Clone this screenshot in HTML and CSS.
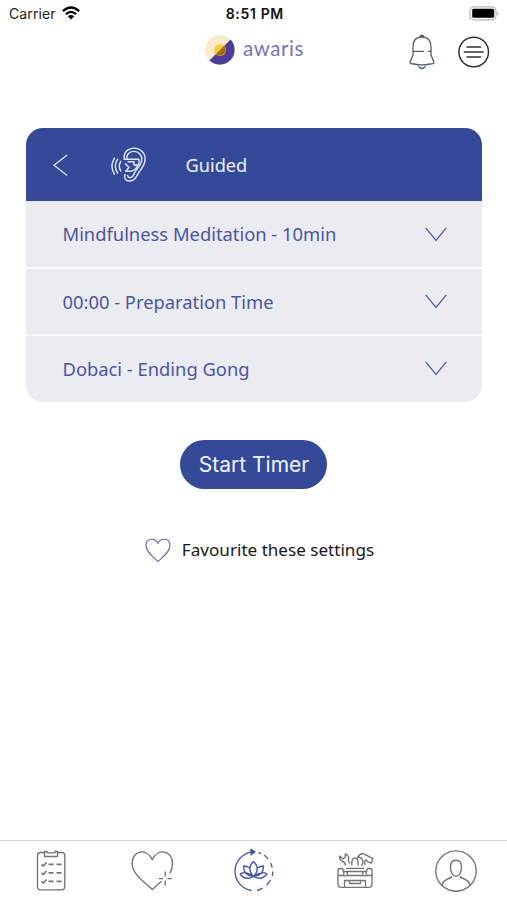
FILE: index.html
```html
<!DOCTYPE html>
<html lang="en">
<head>
<meta charset="utf-8">
<title>Awaris</title>
<link rel="stylesheet" href="styles.css">
</head>
<body>
<div class="screen">
  <div class="status">
    <div class="carrier"><span>Carrier</span>
      <svg width="18" height="14" viewBox="0 0 18 14" fill="none" stroke="#000" stroke-width="2.3"><path d="M.9 5.2Q9-2.2 17.1 5.2M3.9 8.2Q9 3.5 14.1 8.2"/><path d="M5.8 10.3Q9 7.6 12.2 10.3L9 13.5Z" fill="#000" stroke="none"/></svg>
    </div>
    <div class="clock">8:51 PM</div>
    <svg class="battery" width="31" height="15" viewBox="0 0 31 15"><rect x="1" y=".8" width="26" height="13" rx="4" fill="#fff" stroke="#b9b9b9" stroke-width="1.3"/><rect x="3.2" y="2.8" width="22" height="9" rx="1.5" fill="#000"/><path d="M28.4 5.2q2 2.1 0 4.2z" fill="#999"/></svg>
  </div>
  <header class="top">
    <div class="brand">
      <svg width="32" height="30" viewBox="0 0 32 30"><circle cx="16" cy="15" r="15" fill="#fdebd0"/><path d="M5.4 25.6 26.6 4.4A15 15 0 0 1 5.4 25.6Z" fill="#4b3d98"/><circle cx="16" cy="15" r="6" fill="#f8cb45"/><path d="M11.76 19.24 20.24 10.76A6 6 0 0 1 11.76 19.24Z" fill="#a36d0c"/></svg>
      <span class="wordmark">awar<span class="dotted">ı</span>s</span>
    </div>
    <svg class="bell" width="28" height="36" viewBox="0 0 28 36" fill="none" stroke="#555b70" stroke-width="1.3" stroke-linecap="round" stroke-linejoin="round"><path d="M11.5 3.3Q14-.8 16.5 3.3M5 17.4V13Q5 3 14 3T23 13V21L26 28.3Q26 30 22 30Q14 31.8 6 30Q2 30 2 28.3L5 21ZM5 17.4H15.5M20.5 17.4H23M10.8 32.8Q14 36.2 17.2 32.8"/></svg>
    <svg class="menu" width="32" height="32" viewBox="0 0 32 32" fill="none" stroke="#303030" stroke-width="1.5" stroke-linecap="round"><circle cx="15.7" cy="16" r="14.8"/><path d="M9 11H22.5M6.3 16H25.2M9 21H22.5"/></svg>
  </header>
  <main>
    <section class="card">
      <div class="card-head">
        <svg class="back" width="15" height="23" viewBox="0 0 15 23" fill="none" stroke="#dbe2fa" stroke-width="1.3"><path d="M14.2 1 1 11.2 14.2 21.5"/></svg>
        <svg class="ear" width="36" height="36" viewBox="0 0 36 36" fill="none" stroke="#e2e8fc" stroke-width="1.4" stroke-linecap="round" stroke-linejoin="round"><path d="M13.2 12Q12.5 5.5 17 2.8C22-.2 29 .8 32.5 6C37 14 31 21 28.5 24.5C25.5 29 24 34 18.5 34C14.5 34 12.8 31 13.9 27.5"/><path d="M16 11.5C15 8 18 4.6 22.5 4.4C28 4.2 31.2 8.5 30.7 13C30.2 19 25.5 21.5 23.3 26.5C21.7 31 17.5 32 16.5 28.5M13.2 12.2H27.8Q29 16.2 25.8 20M17 14.8H23V18H27M14.5 16.7 18 20.5 14.7 24.3H20.5Q24.5 23 25.8 20"/><path d="M9.8 14.3Q6.7 19.2 9.8 24M6.6 12.2Q2 19.2 6.6 26.2M3.4 11.2Q-1.6 19.2 3.4 27.2"/></svg>
        <h1>Guided</h1>
      </div>
      <div class="row"><span>Mindfulness Meditation - 10min</span><svg width="22" height="15" viewBox="0 0 22 15"><path d="M.7.8 11 13.5 21.3.8"/></svg></div>
      <div class="row"><span>00:00 - Preparation Time</span><svg width="22" height="15" viewBox="0 0 22 15"><path d="M.7.8 11 13.5 21.3.8"/></svg></div>
      <div class="row"><span>Dobaci - Ending Gong</span><svg width="22" height="15" viewBox="0 0 22 15"><path d="M.7.8 11 13.5 21.3.8"/></svg></div>
    </section>
    <button class="start">Start Timer</button>
    <div class="favourite">
      <svg width="26" height="25" viewBox="0 0 26 25" fill="none" stroke="#6267aa" stroke-width="1.1"><path d="M13 5.3C10-.6 1-.2 1 7.5C1 14 8 18.5 13 23.5C18 18.5 25 14 25 7.5C25-.2 16-.6 13 5.3Z"/></svg>
      <span>Favourite these settings</span>
    </div>
  </main>
  <nav class="tabs">
    <a><svg width="44" height="44" viewBox="0 0 44 44"><path d="M15 3.5H11.5Q8.5 3.5 8.5 6.5V37.5Q8.5 40.8 11.5 40.8H32.5Q35.8 40.8 35.8 37.5V6.5Q35.8 3.5 32.5 3.5H29M15.5 2.5H18V3.8H26V2.5H28.5V7.5H15.5Z"/><path stroke-width="1.7" d="M12.5 15.3 14.3 17 17.5 13.5M12.5 23.8 14.3 25.5 17.5 22M12.5 32.3 14.3 34 17.5 30.5M19.5 15.3H24.5M27.5 15.3H32.5M19.5 23.8H24.5M27.5 23.8H32.5M19.5 32.3H24.5M27.5 32.3H32.5"/></svg></a>
    <a><svg width="44" height="44" viewBox="0 0 44 44"><path d="M39.8 24.4C41.5 21.5 42.5 18.5 42.5 14.5C42.5 1.5 28-1.5 22.3 10.8C16.5-1.5 2.2 1.5 2.2 14C2.2 25.5 13.5 32 22.3 40.5L31.5 32.3M35.2 22.5V27.5M35.2 31.5V36.5M28.8 29.6H33.3M37.3 29.6H41.8"/></svg></a>
    <a><svg class="active" width="44" height="44" viewBox="0 0 44 44"><path d="M19.5 41.5A19.5 19.5 0 0 1 21 2.8"/><path d="M19 .3 23 2.9 19 5.8Z" fill="#465aa3"/><path d="M26.5 3.6 29 4.5M32 6A20 20 0 0 1 36 10M38.5 14A20 20 0 0 1 40.2 18.5M40.8 22.5A20 20 0 0 1 40.2 27M38.4 31A20 20 0 0 1 34.7 36M30.5 39.2A20 20 0 0 1 25 41.5"/><path d="M21.5 27.5Q14 19.5 21.5 12.5Q29 19.5 21.5 27.5M21.5 27.5Q11.5 27 11.5 17Q14 16.7 17.1 18.8M21.5 27.5Q31.5 27 31.5 17Q29 16.7 25.9 18.8M21.5 27.5Q13.5 21.5 8 25Q13.5 32 21.5 27.5M21.5 27.5Q29.5 21.5 35 25Q29.5 32 21.5 27.5"/></svg></a>
    <a><svg width="44" height="44" viewBox="0 0 44 44"><path d="M7 19.5H8.7Q10.3 19.5 10.3 22.5H33.7Q33.7 19.5 35.3 19.5H37Q39 19.5 39 22V35Q39 38.3 35.7 38.3H8.3Q5 38.3 5 35V22Q5 19.5 7 19.5ZM5.5 26.5H10.5M14.5 26.5H29.5M33.5 26.5H38.5M11.5 38V31.5H32.5V38M16.5 31.5V34.5H27.5V31.5M10.8 22.5V26.8H14.2V22.5M29.8 22.5V26.8H33.2V22.5M13 19.3H31"/><path d="M12.5 16.5Q12.8 13.7 9.5 12.5Q6 10 6.5 7L10 9.8 12.2 8.5V4.8Q17 7 15.3 11Q15.5 13 17.2 14.5M18.8 16.5Q18.3 9 22 9T25.2 16.5M28.5 16.5Q31.5 13 28.5 9.5Q28 7.8 24.5 8.5Q27.5 3.5 31.5 5.2L37 8.2 39.8 9.3 38.5 14 34.8 12.8 33.2 10.8Q30.5 12 32.5 16"/></svg></a>
    <a><svg width="44" height="44" viewBox="0 0 44 44"><circle cx="22" cy="22" r="20.2"/><path d="M22 11.2C18 11.2 16.5 14 16.5 18C16.5 23 18.7 27.3 22 27.3S27.5 23 27.5 18C27.5 14 26 11.2 22 11.2ZM8.5 37Q7.5 31.5 17.5 28.5V27M26.5 27V28.5Q36.5 31.5 35.5 37"/></svg></a>
  </nav>
</div>
</body>
</html>
```
FILE: styles.css
```css
* { box-sizing: border-box; }
body { margin: 0; background: #fff; font-family: "Noto Sans", sans-serif; }
svg { display: block; flex: none; overflow: visible; }
.screen { width: 507px; height: 900px; display: flex; flex-direction: column; }
.status { height: 28px; padding: 0 7px 0 9px; display: grid; grid-template-columns: 1fr auto 1fr; align-items: center; font-family: Inter, sans-serif; color: #222; }
.carrier { display: flex; align-items: center; gap: 6px; font-size: 14px; line-height: 18px; letter-spacing: .1px; }
.carrier span { margin-top: -1px; }
.carrier svg { margin-top: -2px; }
.clock { margin-top: -1px; font-size: 14px; letter-spacing: .65px; margin-right: -.65px; font-weight: 600; color: #111; }
.battery { justify-self: end; margin-top: -1px; }
.top { height: 50px; display: grid; grid-template-columns: 409px 49px auto; align-items: start; }
.brand { display: flex; align-items: center; padding: 7px 0 0 204px; }
.wordmark { margin: -4px 0 0 7px; font-family: Lato, sans-serif; font-size: 20.5px; line-height: 28px; letter-spacing: .55px; color: #7a72b3; }
.dotted { position: relative; }
.dotted::after { content: ""; position: absolute; left: 1px; top: 4px; width: 3px; height: 3px; border-radius: 50%; background: #b78662; }
.bell { margin: 6px 0 0 -1px; }
.menu { margin-top: 8px; }
main { flex: 1; display: flex; flex-direction: column; align-items: center; padding-top: 50px; }
.card { width: 456px; height: 274px; border-radius: 17px; overflow: hidden; background: #ecebf1; }
.card-head { height: 73px; display: flex; align-items: center; background: #344a98; }
.back { margin: 1px 0 0 27px; }
.ear { margin: 1px 0 0 43px; }
h1 { margin: 0 0 0 39px; font-size: 18.2px; font-weight: 400; color: #eef1fd; }
.row { height: 67px; display: flex; align-items: center; justify-content: space-between; padding: 0 35px 0 37px; font-size: 18.35px; color: #4757a0; }
.row:nth-child(2) { height: 66px; }
.row + .row { border-top: 2px solid #fafafd; }
.row span { margin-top: -1px; }
.row svg { fill: none; stroke: #5360a7; stroke-width: 1.3; }
.start { margin-top: 38px; width: 147px; height: 49px; padding: 0 0 0 1px; border: 0; border-radius: 25px; background: #344a98; color: #f0f4ff; font: 400 21px Inter, sans-serif; }
.favourite { margin: 47px 0 0 12px; display: flex; align-items: center; gap: 11px; font-size: 17.1px; line-height: 28px; color: #171717; }
.tabs { height: 60px; border-top: 1px solid #d8d8d8; display: grid; grid-template-columns: repeat(5, 101.2px); justify-content: center; padding-top: 8px; }
.tabs a { display: flex; justify-content: center; }
.tabs svg { fill: none; stroke: #747474; stroke-width: 1.35; stroke-linejoin: round; }
.tabs .active { stroke: #465aa3; }
```
